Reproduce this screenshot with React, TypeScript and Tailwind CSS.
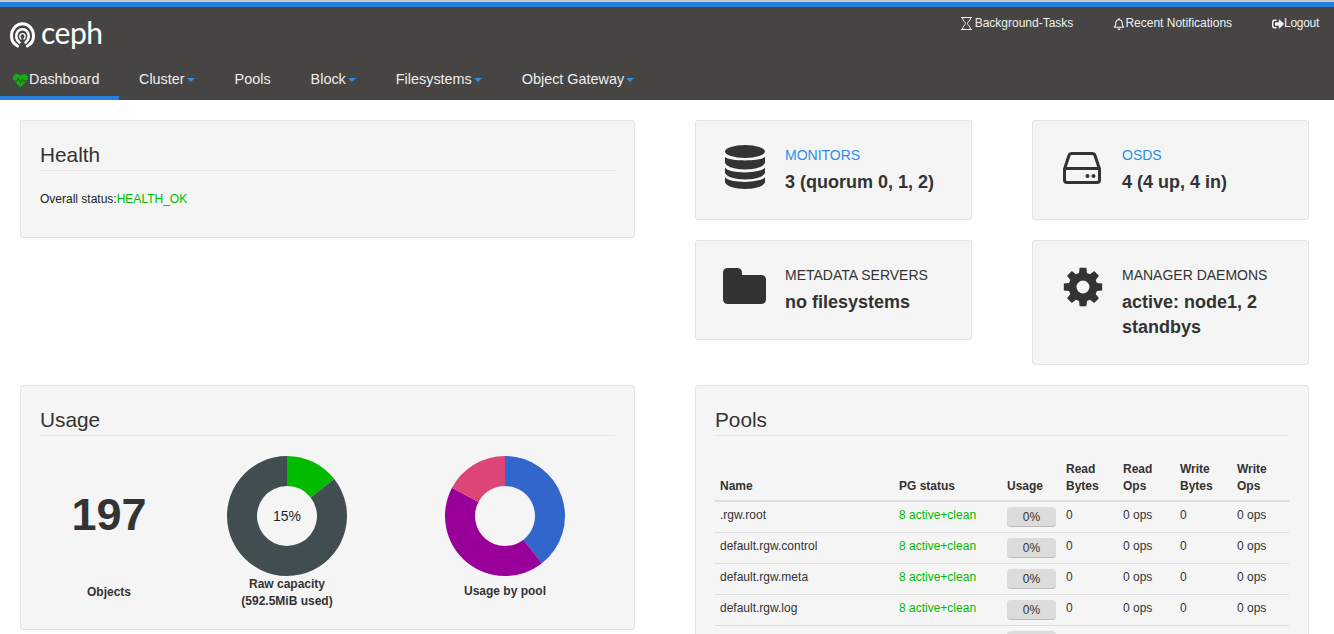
import { FaRegBell, FaSignOutAlt, FaHeartbeat } from "react-icons/fa";
import type { ReactNode } from "react";

const pools = [".rgw.root", "default.rgw.control", "default.rgw.meta", "default.rgw.log"];

function polar(cx: number, cy: number, r: number, deg: number) {
  const a = ((deg - 90) * Math.PI) / 180;
  return [cx + r * Math.cos(a), cy + r * Math.sin(a)];
}

function slice(from: number, to: number) {
  const [x1, y1] = polar(60, 60, 60, from);
  const [x2, y2] = polar(60, 60, 60, to);
  const [x3, y3] = polar(60, 60, 30, to);
  const [x4, y4] = polar(60, 60, 30, from);
  const large = to - from > 180 ? 1 : 0;
  return `M${x1} ${y1}A60 60 0 ${large} 1 ${x2} ${y2}L${x3} ${y3}A30 30 0 ${large} 0 ${x4} ${y4}Z`;
}

function gearPath() {
  let d = "";
  for (let i = 0; i < 8; i++) {
    const c = i * 45;
    const pts = [
      polar(20, 20, 14.5, c - 16),
      polar(20, 20, 19.5, c - 10),
      polar(20, 20, 19.5, c + 10),
      polar(20, 20, 14.5, c + 16),
    ];
    d += (i === 0 ? "M" : "L") + pts.map((p) => `${p[0]} ${p[1]}`).join("L");
  }
  return d + "ZM20 13.5a6.5 6.5 0 1 0 0 13a6.5 6.5 0 1 0 0-13Z";
}

function Donut({ parts, children }: { parts: { from: number; to: number; color: string }[]; children?: ReactNode }) {
  return (
    <div className="relative w-[120px] h-[120px]">
      <svg width="120" height="120" viewBox="0 0 120 120">
        {parts.map((p) => (
          <path key={p.color} d={slice(p.from, p.to)} fill={p.color} />
        ))}
      </svg>
      {children && (
        <div className="absolute inset-0 flex items-center justify-center text-[14px] text-[#222]">{children}</div>
      )}
    </div>
  );
}

function Caret() {
  return <span className="inline-block ml-[2px] mt-[1px] w-0 h-0 border-x-[4px] border-x-transparent border-t-[4px] border-t-[#2b8fe8]" />;
}

function NavItem({ label, caret }: { label: string; caret?: boolean }) {
  return (
    <div className="px-5 h-full flex items-center pt-[1px]">
      {label}
      {caret && <Caret />}
    </div>
  );
}

function InfoCard({ icon, title, link, className, children }: { icon: ReactNode; title: string; link?: boolean; className: string; children: ReactNode }) {
  return (
    <div className={`bg-[#f5f5f5] border border-[#e3e3e3] rounded-[3px] flex ${className}`}>
      <div className="w-[89px] shrink-0 pl-[27px] pt-[24px] text-[#333]">{icon}</div>
      <div className="pt-[24px] pr-2">
        <div className={`text-[14px] leading-5 ${link ? "text-[#2b8fe8]" : "text-[#333]"}`}>{title}</div>
        <div className="text-[18px] leading-[25px] font-bold text-[#333] mt-[5px]">{children}</div>
      </div>
    </div>
  );
}

function PanelTitle({ children }: { children: ReactNode }) {
  return <h2 className="text-[20.8px] leading-[22px] text-[#333] border-b border-[#e5e5e5] h-[27px]">{children}</h2>;
}

export default function App() {
  return (
    <div className="h-[634px] overflow-hidden bg-white font-['Liberation_Sans',Arial,sans-serif] text-[#333]">
      <div className="h-[2px] bg-[#c8c8c8]" />
      <div className="h-[5px] bg-[#2680e0]" />
      <header className="h-[93px] bg-[#474544] text-white flex flex-col">
        <div className="h-[51px] flex justify-between">
          <div className="flex items-center pl-[10px] pt-[4px] gap-[6px]">
            <svg width="25" height="26" viewBox="0 0 25 26" fill="none" stroke="#fff" strokeLinecap="round">
              <path d="M7.6 24C3.8 22.2 1.5 18.4 1.5 13.8 1.5 7.1 6.4 1.8 12.5 1.8S23.5 7.1 23.5 13.8c0 4.6-2.3 8.4-6.1 10.2" strokeWidth="3" />
              <path d="M9.5 20.5C7.4 18.9 6.3 16.9 6.3 14.2 6.3 10.2 9 7.2 12.5 7.2s6.2 3 6.2 7c0 2.7-1.1 4.7-3.2 6.3" strokeWidth="2.6" />
              <path d="M11 17C10.2 16.2 9.8 15.4 9.8 14.4 9.8 12.8 11 11.6 12.5 11.6s2.700 1.200 2.700 2.800c0 1-.4 1.800-1.200 2.600" strokeWidth="1.400" />
            </svg>
            <span className="font-['Lato',sans-serif] text-[30px] leading-none tracking-[-0.5px] -mt-[6px]">ceph</span>
          </div>
          <div className="flex gap-10 pr-[15px] pt-[9px] text-[12px] leading-[15px] text-[#f0f0f0]">
            <div className="flex items-center h-[15px] gap-[3px]">
              <svg width="11" height="13" viewBox="0 0 11 13" fill="none" stroke="#f0f0f0" strokeWidth="1">
                <path d="M0 .5H11M0 12.500H11M1.500 .5C1.500 4 4.500 5 4.500 6.500S1.500 9 1.500 12.500M9.500 .5C9.500 4 6.500 5 6.500 6.500S9.500 9 9.500 12.500" />
              </svg>
              Background-Tasks
            </div>
            <div className="flex items-center h-[15px]"><FaRegBell className="text-[12px]" />Recent Notifications</div>
            <div className="flex items-center h-[15px] tracking-[-0.3px]"><FaSignOutAlt className="text-[12px]" />Logout</div>
          </div>
        </div>
        <nav className="h-[42px] flex text-[14.4px] text-[#eee]">
          <div className="w-[119px] pl-3 flex items-center border-b-[4px] border-[#2680e0] pt-[6px]">
            <FaHeartbeat className="text-[#11b011] text-[15px] w-[17px] shrink-0" />
            <span>Dashboard</span>
          </div>
          <NavItem label="Cluster" caret />
          <NavItem label="Pools" />
          <NavItem label="Block" caret />
          <NavItem label="Filesystems" caret />
          <NavItem label="Object Gateway" caret />
        </nav>
      </header>

      <main className="pl-5 pr-[25px] pt-5 grid grid-cols-[615px_614px] gap-x-[60px] gap-y-5">
        <div className="h-[245px]">
          <section className="h-[118px] bg-[#f5f5f5] border border-[#e3e3e3] rounded-[3px] pt-[23px] px-[19px]">
            <PanelTitle>Health</PanelTitle>
            <div className="text-[12px] mt-[19px] text-[#222]">
              Overall status:<span className="text-[#00bb00]">HEALTH_OK</span>
            </div>
          </section>
        </div>

        <div className="grid grid-cols-[277px_277px] gap-x-[60px] gap-y-5 content-start">
          <InfoCard
            className="h-[100px]"
            link
            title="MONITORS"
            icon={
              <svg width="40" height="44" viewBox="0 0 40 44" fill="currentColor" className="ml-[2px]">
                <ellipse cx="20" cy="6.500" rx="20" ry="6.500" />
                <path d="M0 12C4 16.500 36 16.500 40 12V18C36 26.500 4 26.500 0 18Z" />
                <path d="M0 22.500C4 29 36 29 40 22.500V28C36 36.500 4 36.500 0 28Z" />
                <path d="M0 32C4 38.500 36 38.500 40 32V37.500C36 46 4 46 0 37.500Z" />
              </svg>
            }
          >
            3 (quorum 0, 1, 2)
          </InfoCard>
          <InfoCard
            className="h-[100px]"
            link
            title="OSDS"
            icon={
              <svg width="38" height="32" viewBox="0 0 38 32" fill="none" stroke="currentColor" strokeWidth="3" className="ml-[3px] mt-[7px]">
                <path d="M1.500 17L6 3.500Q6.500 1.500 9 1.500H29Q31.500 1.500 32 3.500L36.500 17V28Q36.500 30.500 34 30.500H4Q1.500 30.500 1.500 28Z" />
                <path d="M1.500 16.500H36.500" />
                <circle cx="24.500" cy="24" r="2" fill="currentColor" stroke="none" />
                <circle cx="30.500" cy="24" r="2" fill="currentColor" stroke="none" />
              </svg>
            }
          >
            4 (4 up, 4 in)
          </InfoCard>
          <InfoCard
            className="h-[100px]"
            title="METADATA SERVERS"
            icon={
              <svg width="43" height="36" viewBox="0 0 43 36" fill="currentColor" className="mt-[3px]">
                <path d="M5 0H14Q19 0 19 5V7H38Q43 7 43 12V31Q43 36 38 36H5Q0 36 0 31V5Q0 0 5 0Z" />
              </svg>
            }
          >
            no filesystems
          </InfoCard>
          <InfoCard
            className="h-[125px]"
            title="MANAGER DAEMONS"
            icon={
              <svg width="40" height="40" viewBox="0 0 40 40" fill="currentColor" fillRule="evenodd" className="ml-[3px] mt-[2px]">
                <path d={gearPath()} />
              </svg>
            }
          >
            active: node1, 2 standbys
          </InfoCard>
        </div>

        <section className="h-[245px] bg-[#f5f5f5] border border-[#e3e3e3] rounded-[3px] pt-[23px] px-[19px] relative">
          <PanelTitle>Usage</PanelTitle>
          <div className="flex mt-[20px]">
            <div className="w-[138px] flex flex-col items-center">
              <div className="h-[120px] flex items-center justify-center text-[45px] font-bold leading-none -mt-[2px]">197</div>
              <div className="text-[12px] font-bold mt-[8px] leading-[21px]">Objects</div>
            </div>
            <div className="w-[180px] ml-[19px] flex flex-col items-center">
              <Donut
                parts={[
                  { from: 0, to: 52, color: "#00bb00" },
                  { from: 52, to: 360, color: "#424d52" },
                ]}
              >
                15%
              </Donut>
              <div className="text-[12px] font-bold text-center leading-[17px]">
                Raw capacity
                <br />
                (592.5MiB used)
              </div>
            </div>
            <div className="w-[180px] ml-[38px] flex flex-col items-center">
              <Donut
                parts={[
                  { from: 0, to: 142, color: "#3366cc" },
                  { from: 142, to: 298, color: "#990099" },
                  { from: 298, to: 360, color: "#dd4477" },
                ]}
              />
              <div className="text-[12px] font-bold mt-[5px] leading-[21px]">Usage by pool</div>
            </div>
          </div>
        </section>

        <section className="h-[400px] bg-[#f5f5f5] border border-[#e3e3e3] rounded-[3px] pt-[23px] px-[19px]">
          <PanelTitle>Pools</PanelTitle>
          <table className="w-[574px] mt-[20px] text-[12px] leading-[17px] table-fixed border-collapse">
            <thead>
              <tr className="border-b-2 border-[#dddddd] text-left align-bottom">
                <th className="w-[179px] p-[5px]">Name</th>
                <th className="w-[108px] p-[5px]">PG status</th>
                <th className="w-[59px] p-[5px]">Usage</th>
                <th className="w-[57px] p-[5px]">Read Bytes</th>
                <th className="w-[57px] p-[5px]">Read Ops</th>
                <th className="w-[57px] p-[5px]">Write Bytes</th>
                <th className="w-[57px] p-[5px]">Write Ops</th>
              </tr>
            </thead>
            <tbody>
              {pools.map((name) => (
                <tr key={name} className="border-b border-[#dddddd] h-[31px] align-top">
                  <td className="px-[5px] pt-[5px] truncate">{name}</td>
                  <td className="px-[5px] pt-[5px] text-[#00bb00]">8 active+clean</td>
                  <td className="px-[5px] pt-[5px]">
                    <div className="w-[49px] h-[20px] bg-[#dcdcdc] border-b border-[#bcbcbc] rounded-[4px] text-center leading-[20px]">0%</div>
                  </td>
                  <td className="px-[5px] pt-[5px]">0</td>
                  <td className="px-[5px] pt-[5px]">0 ops</td>
                  <td className="px-[5px] pt-[5px]">0</td>
                  <td className="px-[5px] pt-[5px]">0 ops</td>
                </tr>
              ))}
              <tr className="h-[31px] align-top">
                <td colSpan={2} />
                <td className="px-[5px] pt-[5px]">
                  <div className="w-[49px] h-[20px] bg-[#dcdcdc] rounded-[4px]" />
                </td>
                <td colSpan={4} />
              </tr>
            </tbody>
          </table>
        </section>
      </main>
    </div>
  );
}
